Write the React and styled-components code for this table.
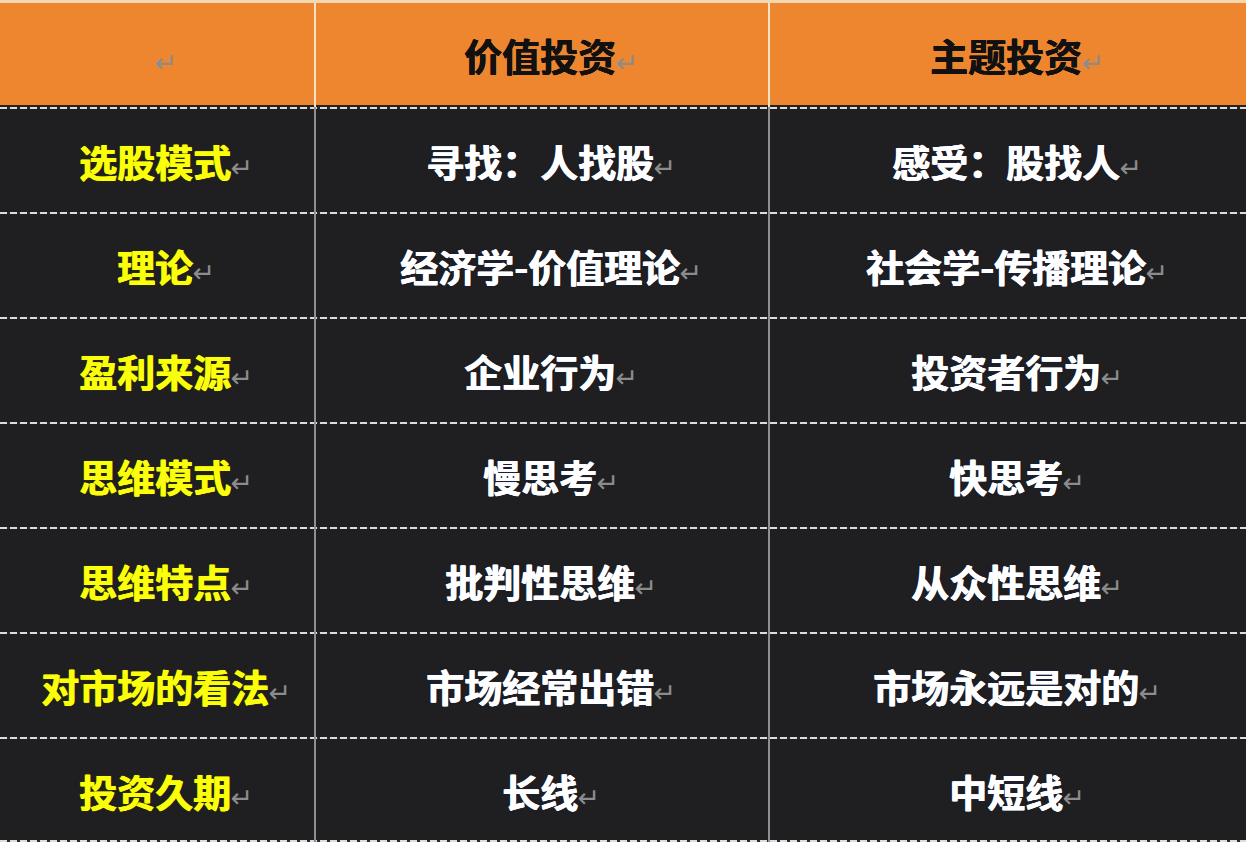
import React from "react";
import styled, { createGlobalStyle } from "styled-components";

const Global = createGlobalStyle`
  html, body { margin: 0; padding: 0; background: #ffffff; }
  body { font-family: "Noto Sans CJK SC", "Noto Sans", sans-serif; }
`;

const dash = "repeating-linear-gradient(to right, #dcdcdc 0 7px, #2a2a2c 7px 10px)";

const Table = styled.div`
  width: 1246px;
  height: 842px;
  display: grid;
  grid-template-rows: 104px repeat(7, 105px);
  border-top: 3px solid #f3d6b4;
  box-sizing: border-box;
  box-shadow: inset 0 1px 0 #b9773f;
`;

const Row = styled.div`
  display: grid;
  grid-template-columns: 314px 454px 478px;
  background: ${(p) =>
    p.$header
      ? "#ee8630"
      : `${dash} top left / 100% 2px no-repeat, ${
          p.$last ? `${dash} bottom left / 100% 2px no-repeat, ` : ""
        }#1f1f21`};
  box-shadow: ${(p) => (p.$header ? "inset 0 -2px 0 #2a2118" : "none")};
`;

const Cell = styled.div`
  display: flex;
  align-items: center;
  justify-content: center;
  padding: ${(p) => (p.$header ? "0" : "2px")} 0 0 18px;
  box-sizing: border-box;
  border-left: ${(p) =>
    p.$first ? "none" : p.$header ? "2px solid #f7e2c4" : "2px solid #8f8f93"};
  font-size: 38px;
  font-weight: 700;
  line-height: 1;
  white-space: nowrap;
  color: ${(p) => p.$color};
  text-shadow: ${(p) =>
    p.$header
      ? "0.4px 0 0 #111, -0.4px 0 0 #111, 0 0.4px 0 #111"
      : p.$label
      ? "0.5px 0 0 #f4f400, -0.5px 0 0 #f4f400, 0 0 2px #3a3a00"
      : "0.5px 0 0 #fff, -0.5px 0 0 #fff, 0 0 2px rgba(20,40,120,0.7)"};
`;

const Mark = styled.span`
  font-family: "DejaVu Sans", sans-serif;
  font-size: 27px;
  font-weight: 400;
  color: #8c8c8c;
  text-shadow: none;
  margin-left: -1px;
  position: relative;
  top: 7px;
`;

const headers = ["", "价值投资", "主题投资"];

const rows = [
  ["选股模式", "寻找：人找股", "感受：股找人"],
  ["理论", "经济学-价值理论", "社会学-传播理论"],
  ["盈利来源", "企业行为", "投资者行为"],
  ["思维模式", "慢思考", "快思考"],
  ["思维特点", "批判性思维", "从众性思维"],
  ["对市场的看法", "市场经常出错", "市场永远是对的"],
  ["投资久期", "长线", "中短线"],
];

export default function App() {
  return (
    <>
      <Global />
      <Table>
        <Row $header>
          {headers.map((h, i) => (
            <Cell key={i} $header $first={i === 0} $color="#111111">
              {h}
              <Mark>↵</Mark>
            </Cell>
          ))}
        </Row>
        {rows.map((r, ri) => (
          <Row key={ri} $last={ri === rows.length - 1}>
            {r.map((t, ci) => (
              <Cell
                key={ci}
                $first={ci === 0}
                $label={ci === 0}
                $color={ci === 0 ? "#fbff0a" : "#ffffff"}
              >
                {t}
                <Mark>↵</Mark>
              </Cell>
            ))}
          </Row>
        ))}
      </Table>
    </>
  );
}
